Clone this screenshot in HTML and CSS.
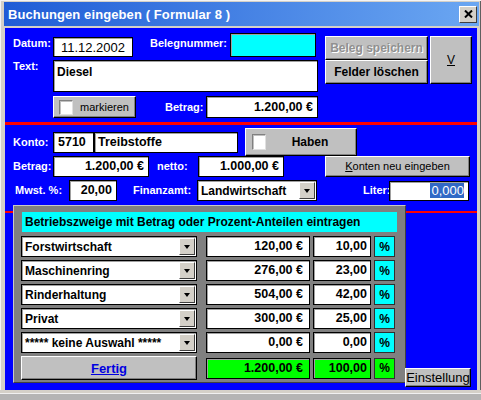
FILE: index.html
```html
<!DOCTYPE html>
<html>
<head>
<meta charset="utf-8">
<link rel="stylesheet" href="styles.css">
</head>
<body>
<div class="window">
  <div class="titlebar">
    <span class="title">Buchungen eingeben ( Formular 8 )</span>
    <div class="close"><svg width="9" height="8" viewBox="0 0 9 8"><path d="M1 0.5 L8 7.5 M8 0.5 L1 7.5" stroke="#000" stroke-width="2"/></svg></div>
  </div>
  <div class="body">
    <div class="sec1">
      <div class="s1-left">
        <div class="row row-a">
          <span class="lbl lbl-top w40">Datum:</span>
          <div class="box date">11.12.2002</div>
          <span class="lbl lbl-top lbl-beleg">Belegnummer:</span>
          <div class="box cyan"></div>
        </div>
        <div class="row row-b">
          <span class="lbl w40">Text:</span>
          <div class="box memo">Diesel</div>
        </div>
        <div class="row row-c">
          <div class="btn mark"><span class="check"></span><span>markieren</span></div>
          <span class="lbl lbl-betrag1">Betrag:</span>
          <div class="box num betrag1">1.200,00 €</div>
        </div>
      </div>
      <div class="s1-right">
        <div class="btn bold dis">Beleg speichern</div>
        <div class="btn vbtn"><u>V</u></div>
        <div class="btn bold felder">Felder löschen</div>
      </div>
    </div>
    <div class="redline"></div>
    <div class="sec2">
      <div class="row row-d">
        <span class="lbl w40">Konto:</span>
        <div class="box kto">5710</div>
        <div class="box ktoname">Treibstoffe</div>
        <div class="btn haben"><span class="check"></span><span class="haben-t">Haben</span></div>
      </div>
      <div class="row row-e">
        <span class="lbl w40">Betrag:</span>
        <div class="box num b2">1.200,00 €</div>
        <span class="lbl lbl-netto">netto:</span>
        <div class="box num netto">1.000,00 €</div>
        <div class="btn konten"><span><u>K</u>onten neu eingeben</span></div>
      </div>
      <div class="row row-f">
        <span class="lbl lbl-mwst">Mwst. %:</span>
        <div class="box num mwst">20,00</div>
        <span class="lbl lbl-fa">Finanzamt:</span>
        <div class="box sel fa"><span>Landwirtschaft</span><span class="drop"></span></div>
        <span class="lbl lbl-liter">Liter:</span>
        <div class="box num liter"><span class="hl">0,000</span></div>
      </div>
    </div>
    <div class="lower">
      <div class="panel">
        <div class="phead">Betriebszweige mit Betrag oder Prozent-Anteilen eintragen</div>
        <div class="prow first">
          <div class="box sel psel"><span>Forstwirtschaft</span><span class="drop"></span></div>
          <div class="box num pamt">120,00 €</div>
          <div class="box num ppct">10,00</div>
          <div class="pbtn">%</div>
        </div>
        <div class="prow">
          <div class="box sel psel"><span>Maschinenring</span><span class="drop"></span></div>
          <div class="box num pamt">276,00 €</div>
          <div class="box num ppct">23,00</div>
          <div class="pbtn">%</div>
        </div>
        <div class="prow">
          <div class="box sel psel"><span>Rinderhaltung</span><span class="drop"></span></div>
          <div class="box num pamt">504,00 €</div>
          <div class="box num ppct">42,00</div>
          <div class="pbtn">%</div>
        </div>
        <div class="prow">
          <div class="box sel psel"><span>Privat</span><span class="drop"></span></div>
          <div class="box num pamt">300,00 €</div>
          <div class="box num ppct">25,00</div>
          <div class="pbtn">%</div>
        </div>
        <div class="prow">
          <div class="box sel psel"><span>***** keine Auswahl *****</span><span class="drop"></span></div>
          <div class="box num pamt">0,00 €</div>
          <div class="box num ppct">0,00</div>
          <div class="pbtn">%</div>
        </div>
        <div class="prow total">
          <div class="btn fertig"><u>Fertig</u></div>
          <div class="box num pamt green">1.200,00 €</div>
          <div class="box num ppct green">100,00</div>
          <div class="pbtn green">%</div>
        </div>
      </div>
      <div class="lower-right">
        <div class="btn einst">Einstellung</div>
      </div>
    </div>
  </div>
  <div class="foot"></div>
</div>
</body>
</html>
```
FILE: styles.css
```css
html, body { margin: 0; padding: 0; }
body {
  width: 481px; height: 400px; overflow: hidden;
  font-family: "Liberation Sans", Arial, sans-serif;
  background: #c0c0c0;
}
.window {
  width: 481px; height: 400px; box-sizing: border-box;
  padding: 2px 2px 0 4px;
  background: #d4d0c8;
  box-shadow: inset 1px 1px 0 #f4f4f4, inset -1px 0 0 #606060;
}
.titlebar {
  height: 24px; display: flex; align-items: center; justify-content: space-between;
  background: linear-gradient(to right, #1f5cd6, #6ba7f2);
  color: #fff; padding-left: 4px;
}
.title { font: bold 13px/1 "Liberation Sans", Arial, sans-serif; letter-spacing: 0.1px; }
.close {
  width: 18px; height: 17px; margin-right: 2px; box-sizing: border-box;
  background: #d4d0c8; border: 1px solid; border-color: #fff #404040 #404040 #fff;
  display: flex; align-items: center; justify-content: center;
}
.body {
  margin-top: 2px; margin-left: 1px; width: 472px; height: 362px;
  background: #0000ff; overflow: hidden;
}
.foot {
  height: 10px; margin: 0 -2px 0 -4px;
  background: linear-gradient(#d4d0c8 0 3px, #f0f0f0 3px 4px, #b4b4b4 4px);
}

.row { display: flex; padding-left: 8px; }
.lbl {
  color: #fff; font: bold 11px/13px "Liberation Sans", Arial, sans-serif;
  white-space: nowrap; flex: none;
}
.w40 { width: 40px; }
.box {
  box-sizing: border-box; background: #fff; border: 1px solid #000;
  box-shadow: inset 1px 1px 0 #a0a0a0;
  display: flex; align-items: center; flex: none;
  font: bold 12.5px/1 "Liberation Sans", Arial, sans-serif; color: #000;
  white-space: nowrap; overflow: hidden;
}
.num { justify-content: flex-end; padding-right: 4px; }
.btn {
  box-sizing: border-box; background: #c0c0c0;
  border: 1px solid; border-color: #fff #000 #000 #fff;
  box-shadow: inset -1px -1px 0 #808080;
  display: flex; align-items: center; justify-content: center; flex: none;
  font: 11px/1 "Liberation Sans", Arial, sans-serif; color: #000; white-space: nowrap;
}
.bold { font-weight: bold; font-size: 12px; }
.check {
  box-sizing: border-box; width: 14px; height: 15px; background: #fff; flex: none;
  border: 1px solid; border-color: #808080 #e0e0e0 #e0e0e0 #808080;
  box-shadow: inset 1px 1px 0 #c0c0c0;
}

/* section 1 */
.sec1 { display: flex; height: 94px; }
.s1-left { width: 320px; flex: none; }
.row-a { margin-top: 5px; height: 24px; align-items: flex-end; }
.lbl-top { align-self: flex-start; margin-top: 4px; }
.date { width: 80px; height: 20px; justify-content: center; font-weight: normal; font-size: 13px; }
.lbl-beleg { margin-left: 17px; width: 80px; }
.cyan { width: 86px; height: 24px; background: #00ffff; }
.row-b { margin-top: 3px; height: 32px; align-items: flex-start; }
.row-b .lbl { margin-top: 0; }
.memo { width: 265px; height: 32px; align-items: flex-start; padding: 5px 0 0 3px; font-size: 12px; }
.row-c { margin-top: 4px; height: 22px; align-items: center; }
.mark { margin-left: 40px; width: 83px; height: 22px; justify-content: flex-start; }
.mark .check { margin: 0 7px 0 5px; }
.lbl-betrag1 { margin-left: 29px; width: 41px; }
.betrag1 { width: 112px; height: 22px; }
.s1-right {
  display: grid; grid-template-columns: 103px 42px; grid-template-rows: 24px 24px;
  column-gap: 2px; margin-top: 8px; align-self: flex-start;
}
.dis { grid-column: 1; grid-row: 1; color: #909090; text-shadow: 1px 1px 0 #fff; }
.felder { grid-column: 1; grid-row: 2; }
.vbtn { grid-column: 2; grid-row: 1 / 3; font-size: 12px; }
.redline { height: 3px; background: #ff0000; }

/* section 2 */
.row-d { margin-top: 3px; height: 28px; align-items: center; }
.kto { width: 41px; height: 21px; padding-left: 4px; }
.ktoname { width: 144px; height: 21px; padding-left: 3px; }
.haben { margin-left: 7px; width: 112px; height: 28px; justify-content: flex-start; }
.haben .check { margin-left: 6px; height: 16px; }
.haben-t { flex: 1; text-align: center; font-weight: bold; font-size: 12px; padding-right: 2px; }
.row-e { height: 21px; align-items: center; }
.b2 { width: 96px; height: 21px; }
.lbl-netto { margin-left: 8px; width: 41px; }
.netto { width: 86px; height: 21px; }
.konten { margin-left: 41px; width: 145px; height: 21px; font-size: 11px; }
.row-f { margin-top: 3px; height: 21px; align-items: center; }
.lbl-mwst { margin-left: 2px; width: 54px; }
.mwst { width: 48px; height: 21px; }
.lbl-fa { margin-left: 16px; width: 64px; }
.fa { width: 120px; height: 21px; }
.lbl-liter { margin-left: 46px; width: 26px; }
.liter { width: 80px; height: 20px; }
.hl { background: #3169c6; color: #fff; padding: 1px 0 1px 1px; font-weight: normal; font-size: 13px; }

.sel { padding-left: 3px; font-size: 12px; }
.drop {
  box-sizing: border-box; width: 16px; height: 17px; margin-left: auto; margin-right: 1px;
  background: #d4d0c8; border: 1px solid; border-color: #fff #404040 #404040 #fff;
  display: flex; align-items: center; justify-content: center; flex: none;
}
.drop::after {
  content: ""; width: 0; height: 0;
  border-left: 3.5px solid transparent; border-right: 3.5px solid transparent;
  border-top: 4px solid #000;
}

/* lower panel */
.lower {
  display: flex; height: 185px; margin-top: 4px;
  background: linear-gradient(#ff0000, #ff0000) 0 6px / 100% 2px no-repeat;
}
.panel {
  box-sizing: border-box; margin-left: 8px; width: 393px; height: 178px; flex: none;
  background: #808080; border: 1px solid; border-color: #c8c8c8 #404040 #404040 #c8c8c8;
  padding: 6px 0 0 7px;
}
.phead {
  box-sizing: border-box; width: 375px; height: 20px; margin-left: 1px;
  background: #00ffff; display: flex; align-items: center; padding-left: 3px;
  font: bold 12px/1 "Liberation Sans", Arial, sans-serif; white-space: nowrap;
}
.prow { display: flex; height: 21px; margin-top: 3px; align-items: center; }
.prow.first { margin-top: 4px; }
.psel { width: 176px; height: 21px; }
.pamt { width: 104px; height: 21px; margin-left: 9px; padding-right: 6px; }
.ppct { width: 58px; height: 21px; margin-left: 3px; padding-right: 3px; }
.pbtn {
  box-sizing: border-box; width: 21px; height: 21px; margin-left: 3px; flex: none;
  background: #00ffff; border: 1px solid #303030;
  display: flex; align-items: center; justify-content: center;
  font: bold 12px/1 "Liberation Sans", Arial, sans-serif;
}
.prow.total { height: 24px; }
.fertig { width: 176px; height: 24px; font-weight: bold; font-size: 13px; color: #0000e0; }
.green { background: #00ff00; }
.lower-right {
  flex: 1; display: flex; flex-direction: column; justify-content: flex-end; padding-bottom: 3px;
}
.einst { width: 66px; height: 19px; margin-left: -1px; font-size: 13px; }
```
